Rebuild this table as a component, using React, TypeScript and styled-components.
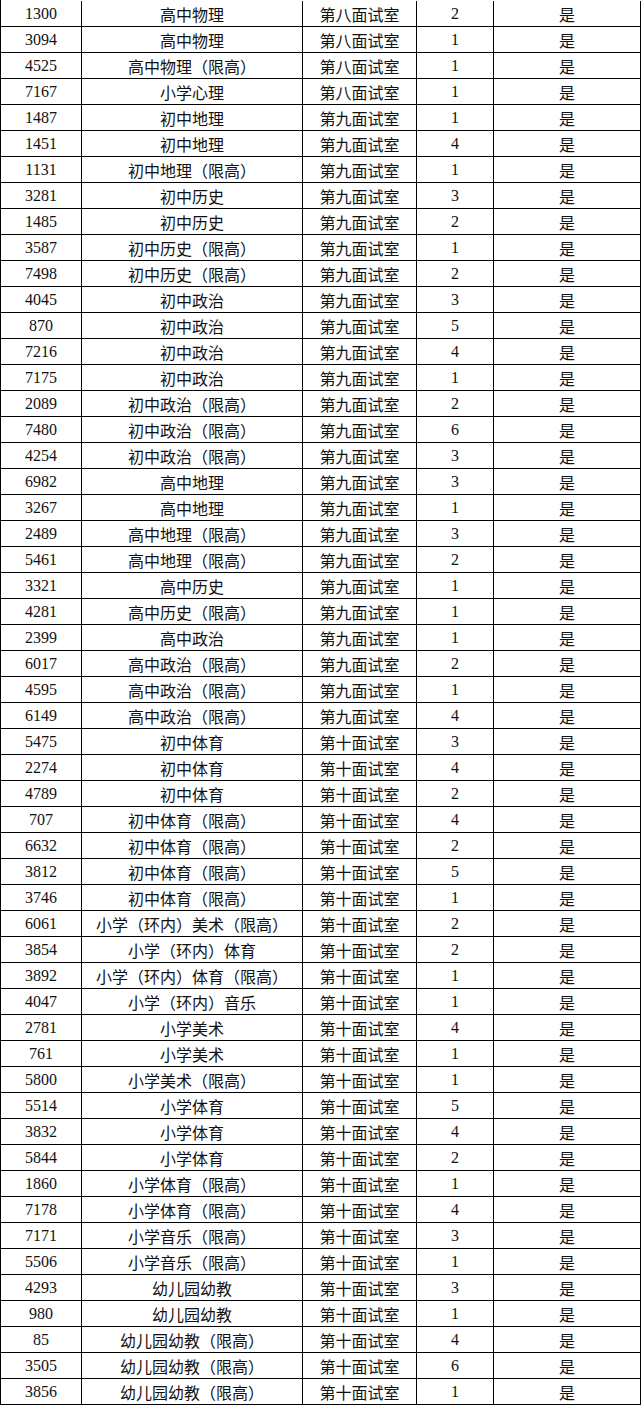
import React from 'react';
import styled, {createGlobalStyle} from 'styled-components';

type Row = [string, string, string, string];

const rows: Row[] = [
    ['1300', '高中物理', '第八面试室', '2'],
    ['3094', '高中物理', '第八面试室', '1'],
    ['4525', '高中物理（限高）', '第八面试室', '1'],
    ['7167', '小学心理', '第八面试室', '1'],
    ['1487', '初中地理', '第九面试室', '1'],
    ['1451', '初中地理', '第九面试室', '4'],
    ['1131', '初中地理（限高）', '第九面试室', '1'],
    ['3281', '初中历史', '第九面试室', '3'],
    ['1485', '初中历史', '第九面试室', '2'],
    ['3587', '初中历史（限高）', '第九面试室', '1'],
    ['7498', '初中历史（限高）', '第九面试室', '2'],
    ['4045', '初中政治', '第九面试室', '3'],
    ['870', '初中政治', '第九面试室', '5'],
    ['7216', '初中政治', '第九面试室', '4'],
    ['7175', '初中政治', '第九面试室', '1'],
    ['2089', '初中政治（限高）', '第九面试室', '2'],
    ['7480', '初中政治（限高）', '第九面试室', '6'],
    ['4254', '初中政治（限高）', '第九面试室', '3'],
    ['6982', '高中地理', '第九面试室', '3'],
    ['3267', '高中地理', '第九面试室', '1'],
    ['2489', '高中地理（限高）', '第九面试室', '3'],
    ['5461', '高中地理（限高）', '第九面试室', '2'],
    ['3321', '高中历史', '第九面试室', '1'],
    ['4281', '高中历史（限高）', '第九面试室', '1'],
    ['2399', '高中政治', '第九面试室', '1'],
    ['6017', '高中政治（限高）', '第九面试室', '2'],
    ['4595', '高中政治（限高）', '第九面试室', '1'],
    ['6149', '高中政治（限高）', '第九面试室', '4'],
    ['5475', '初中体育', '第十面试室', '3'],
    ['2274', '初中体育', '第十面试室', '4'],
    ['4789', '初中体育', '第十面试室', '2'],
    ['707', '初中体育（限高）', '第十面试室', '4'],
    ['6632', '初中体育（限高）', '第十面试室', '2'],
    ['3812', '初中体育（限高）', '第十面试室', '5'],
    ['3746', '初中体育（限高）', '第十面试室', '1'],
    ['6061', '小学（环内）美术（限高）', '第十面试室', '2'],
    ['3854', '小学（环内）体育', '第十面试室', '2'],
    ['3892', '小学（环内）体育（限高）', '第十面试室', '1'],
    ['4047', '小学（环内）音乐', '第十面试室', '1'],
    ['2781', '小学美术', '第十面试室', '4'],
    ['761', '小学美术', '第十面试室', '1'],
    ['5800', '小学美术（限高）', '第十面试室', '1'],
    ['5514', '小学体育', '第十面试室', '5'],
    ['3832', '小学体育', '第十面试室', '4'],
    ['5844', '小学体育', '第十面试室', '2'],
    ['1860', '小学体育（限高）', '第十面试室', '1'],
    ['7178', '小学体育（限高）', '第十面试室', '4'],
    ['7171', '小学音乐（限高）', '第十面试室', '3'],
    ['5506', '小学音乐（限高）', '第十面试室', '1'],
    ['4293', '幼儿园幼教', '第十面试室', '3'],
    ['980', '幼儿园幼教', '第十面试室', '1'],
    ['85', '幼儿园幼教（限高）', '第十面试室', '4'],
    ['3505', '幼儿园幼教（限高）', '第十面试室', '6'],
    ['3856', '幼儿园幼教（限高）', '第十面试室', '1'],
];

const App = () => {
    return (
        <>
            <GlobalStyle/>
            <StyledTable>
                {rows.map(([code, subject, room, count], i) => (
                    <StyledRow key={i}>
                        <StyledCell $numeric>{code}</StyledCell>
                        <StyledCell>{subject}</StyledCell>
                        <StyledCell>{room}</StyledCell>
                        <StyledCell $numeric>{count}</StyledCell>
                        <StyledCell>是</StyledCell>
                    </StyledRow>
                ))}
            </StyledTable>
        </>
    );
};

const GlobalStyle = createGlobalStyle`
  html, body {
    margin: 0;
    padding: 0;
    background: #fff;
  }
`

const StyledTable = styled.div`
  width: 641px;
  box-sizing: border-box;
  padding-top: 1px;
  border-left: 1px solid #000;
  background: #fff;
`

const StyledRow = styled.div`
  display: grid;
  grid-template-columns: 81px 221px 114px 77px 147px;
`

const StyledCell = styled.div<{ $numeric?: boolean }>`
  box-sizing: border-box;
  height: 26px;
  border-right: 1px solid #000;
  border-bottom: 1px solid #000;
  display: flex;
  align-items: center;
  justify-content: center;
  color: #111;
  white-space: nowrap;
  font-family: ${p => p.$numeric
          ? '"Liberation Serif", "Noto Sans CJK SC", serif'
          : '"Noto Sans CJK SC", "Noto Sans", sans-serif'};
  font-size: 16px;
  line-height: 1;
  padding-top: ${p => p.$numeric ? '1px' : '0'};
`

export default App;
